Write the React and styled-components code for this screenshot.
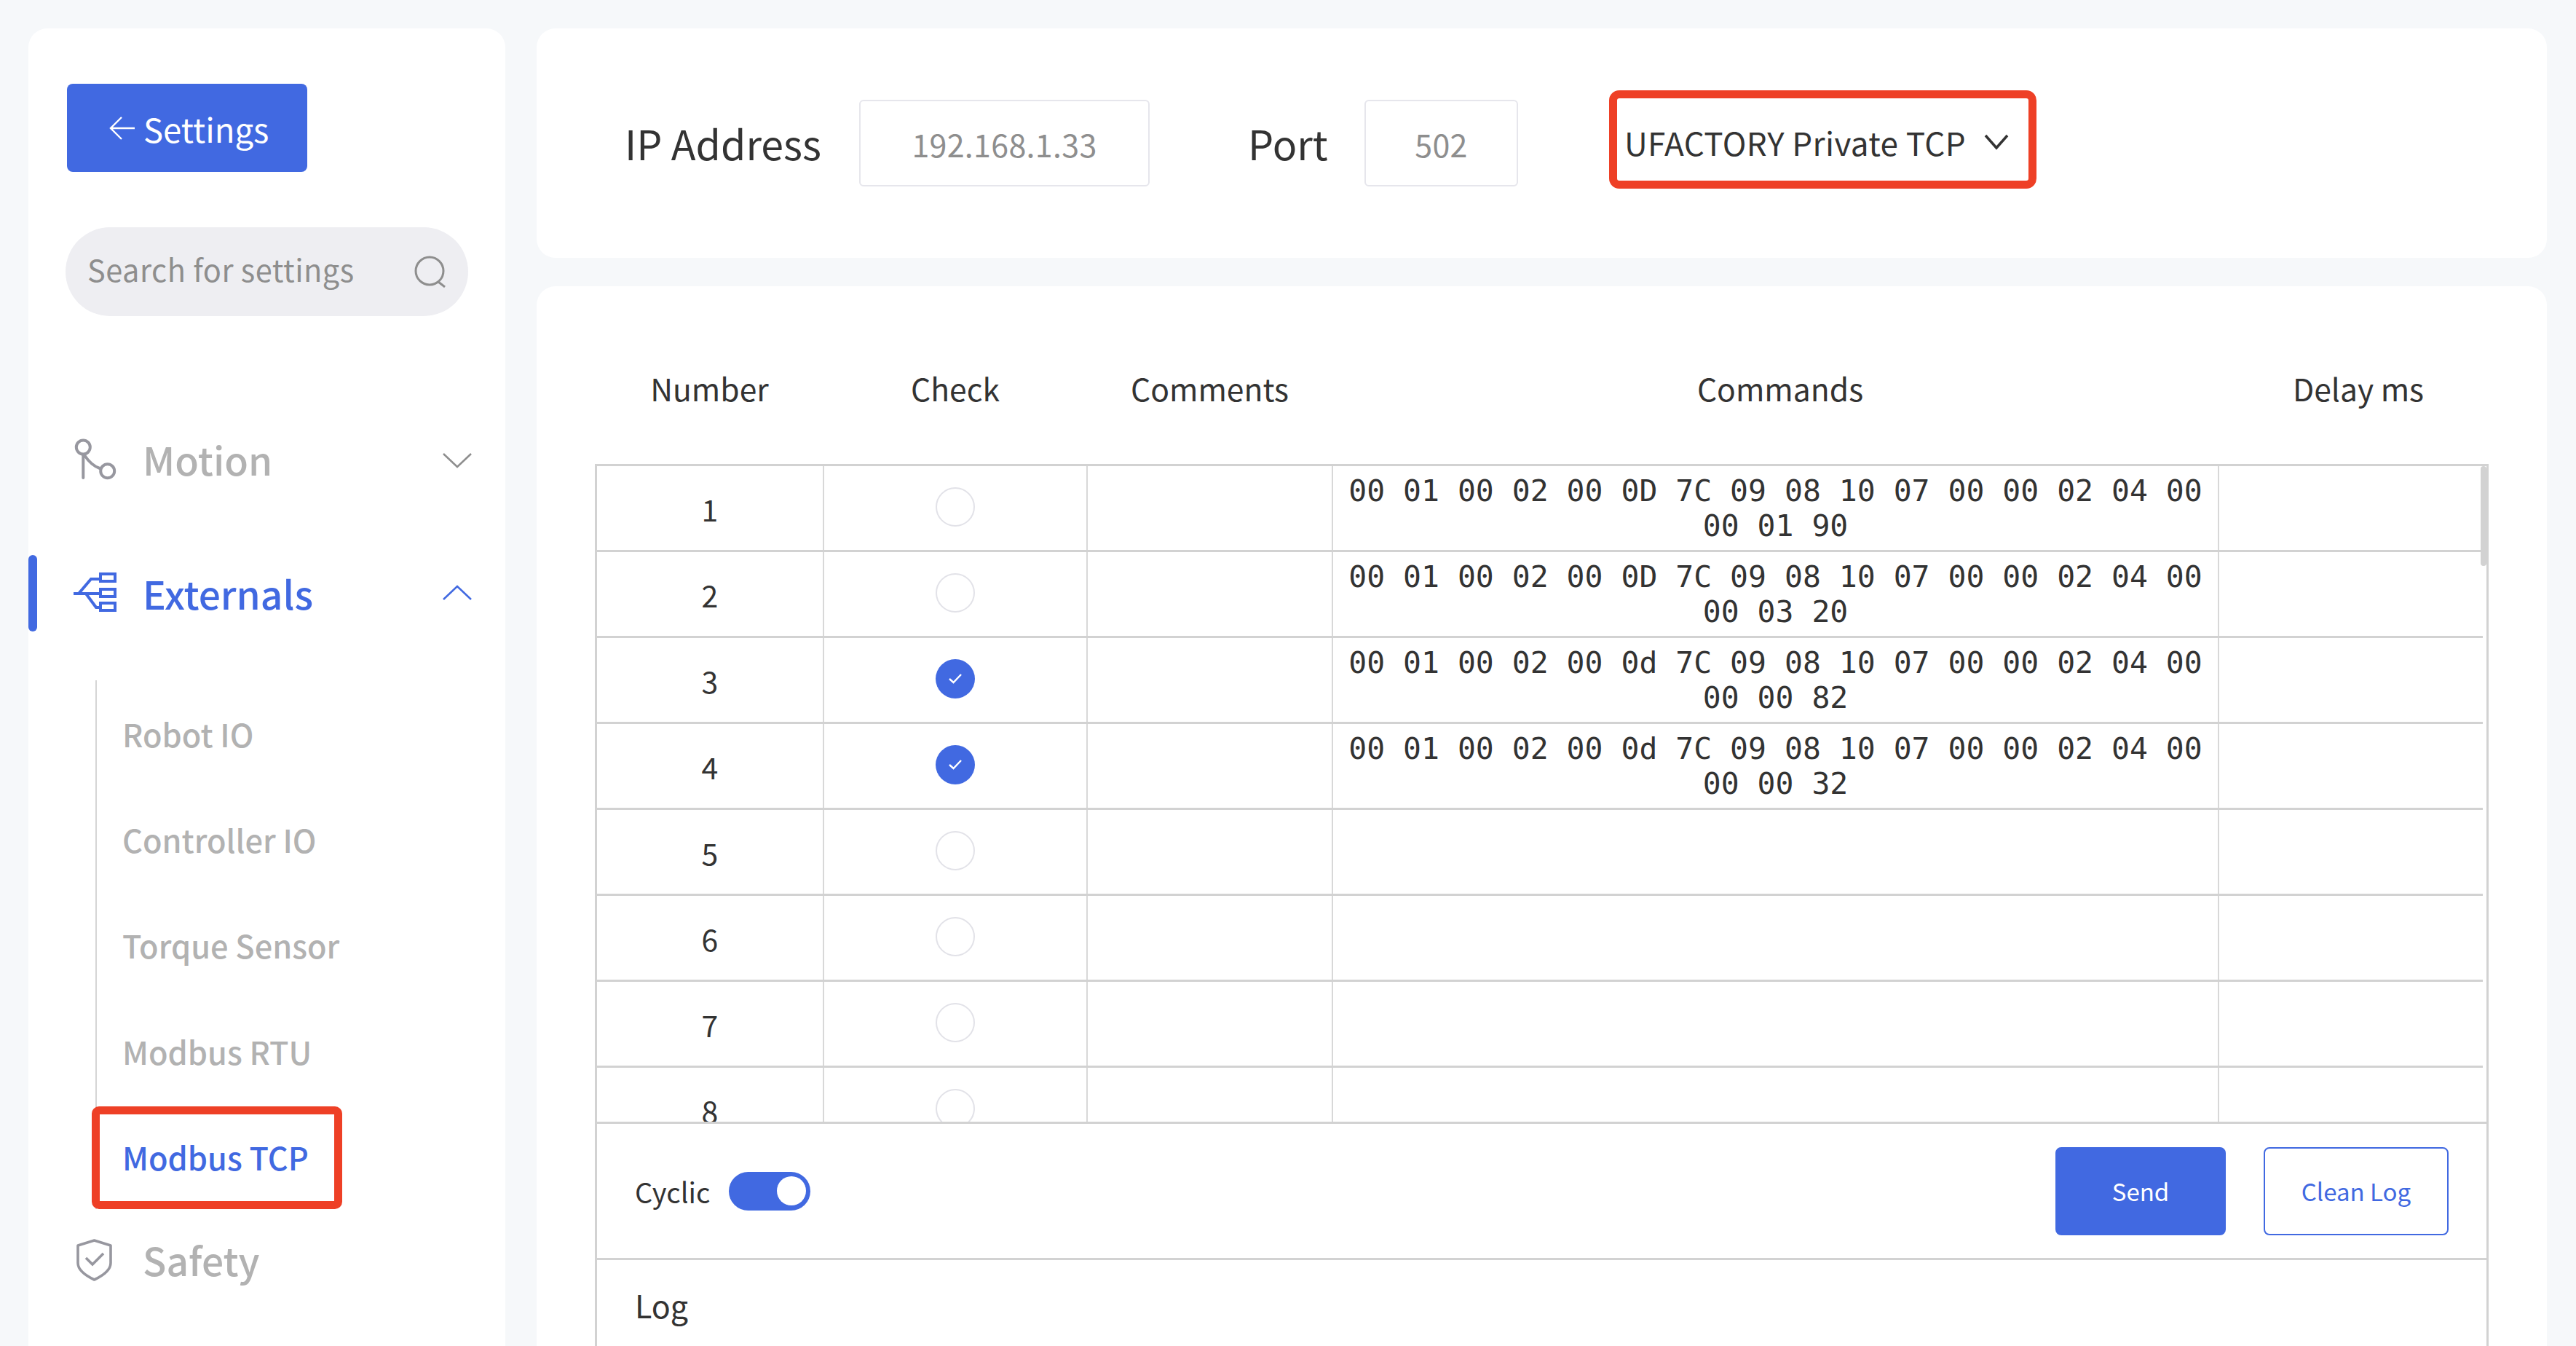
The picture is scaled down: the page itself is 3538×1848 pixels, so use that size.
import React from 'react'
import styled, { createGlobalStyle } from 'styled-components'

const BLUE = '#4169e1'
const RED = '#ee4026'
const LINE = '#d2d2d2'
const SANS = '"Noto Sans CJK SC", "Noto Sans", sans-serif'

const GlobalStyle = createGlobalStyle`
  html, body {
    margin: 0;
    padding: 0;
    background: #f6f8fa;
    font-family: ${SANS};
    color: #333;
  }
  *, *::before, *::after {
    box-sizing: border-box;
  }
`

const Page = styled.div`
  display: flex;
  gap: 43px;
  width: 3538px;
  height: 1848px;
  padding: 39px 40px 0 39px;
  overflow: hidden;
`

/* SIDEBAR */
const Sidebar = styled.aside`
  position: relative;
  flex: 0 0 655px;
  height: 1900px;
  padding-top: 76px;
  background: #fff;
  border-radius: 26px;
`

const BackButton = styled.button`
  display: flex;
  align-items: center;
  gap: 11px;
  width: 330px;
  height: 121px;
  margin-left: 53px;
  padding: 0 0 0 58px;
  font-family: inherit;
  font-size: 45.5px;
  color: #fff;
  background: ${BLUE};
  border: 0;
  border-radius: 8px;
`

const Search = styled.div`
  display: flex;
  align-items: center;
  justify-content: space-between;
  width: 553px;
  height: 122px;
  margin: 76px 0 146px 51px;
  padding: 0 30px 0 30px;
  font-size: 41.5px;
  letter-spacing: 0.5px;
  color: #8e8e8e;
  background: #eeeef2;
  border-radius: 61px;
  span {
    margin-bottom: 8px;
  }
`

const NavRow = styled.div`
  position: relative;
  display: flex;
  align-items: center;
  height: 105px;
  margin-bottom: ${(p) => p.$after || 0}px;
  padding-left: 51px;
  font-size: 53.3px;
  font-weight: 500;
  color: ${(p) => (p.$active ? BLUE : '#b2b2b2')};
  &::before {
    content: '';
    display: ${(p) => (p.$active ? 'block' : 'none')};
    position: absolute;
    left: 0;
    top: 0;
    bottom: 0;
    width: 12px;
    background: ${BLUE};
    border-radius: 6px;
  }
`

const NavLabel = styled.span`
  margin-bottom: ${(p) => (p.$active ? 2 : 6)}px;
`

const NavIcon = styled.svg`
  flex: none;
  margin-right: ${(p) => p.$gap}px;
  fill: none;
  stroke: ${(p) => (p.$active ? BLUE : '#97979f')};
`

const NavChevron = styled.svg`
  position: absolute;
  right: 46px;
  top: 50%;
  margin-top: -13px;
  fill: none;
  stroke: ${(p) => (p.$active ? BLUE : '#8e8e8e')};
  stroke-width: 2.5;
`

const SubList = styled.div`
  width: 563px;
  margin: 0 0 19px 92px;
  border-left: 2px solid #d5d5d5;
`

const SubItem = styled.div`
  position: relative;
  display: flex;
  align-items: center;
  height: 145.3px;
  padding-left: 35px;
  font-size: 43.3px;
  font-weight: 500;
  color: ${(p) => (p.$active ? BLUE : '#b2b2b2')};
  &::after {
    content: '';
    display: ${(p) => (p.$active ? 'block' : 'none')};
    position: absolute;
    left: -7px;
    top: 4px;
    width: 344px;
    height: 141px;
    border: 11px solid ${RED};
    border-radius: 10px;
  }
`

/* MAIN COLUMN */
const Main = styled.main`
  flex: 1;
  display: flex;
  flex-direction: column;
  gap: 39px;
  min-width: 0;
`

const ConnectionCard = styled.section`
  display: flex;
  align-items: center;
  flex: none;
  height: 315px;
  padding-left: 121px;
  background: #fff;
  border-radius: 26px;
`

const FieldLabel = styled.span`
  margin-bottom: 2px;
  margin-left: ${(p) => p.$left || 0}px;
  width: ${(p) => p.$width}px;
  font-size: 55.5px;
  white-space: nowrap;
`

const Field = styled.div`
  display: flex;
  align-items: center;
  justify-content: center;
  width: ${(p) => p.$width}px;
  height: 119px;
  font-size: 43px;
  letter-spacing: 0.3px;
  color: #8e8e8e;
  border: 2px solid #e6e6ec;
  border-radius: 6px;
`

const ProtocolSelect = styled.div`
  display: flex;
  align-items: center;
  width: 587px;
  height: 135px;
  margin: 0 0 10px 125px;
  padding: 7px 0 0 10px;
  font-size: 44px;
  letter-spacing: 0.4px;
  white-space: nowrap;
  border: 11px solid ${RED};
  border-radius: 14px;
  svg {
    flex: none;
    margin-left: 25px;
    fill: none;
    stroke: #333;
    stroke-width: 3.5;
  }
`

const TableCard = styled.section`
  flex: none;
  height: 1500px;
  padding: 39px 80px 0 81px;
  background: #fff;
  border-radius: 26px;
`

const HeaderRow = styled.div`
  display: grid;
  grid-template-columns: 313px 362px 337px 1230px 358px;
  align-items: center;
  height: 206px;
  padding-bottom: 6px;
  font-size: 42.6px;
  text-align: center;
`

const TableFrame = styled.div`
  border: solid ${LINE};
  border-width: 3px 3px 0 3px;
  margin: -1px 0 0 -1px;
`

const TableBody = styled.div`
  position: relative;
  height: 900px;
  overflow: hidden;
`

const ScrollThumb = styled.div`
  position: absolute;
  top: 0;
  right: 0;
  width: 8px;
  height: 137px;
  background: ${LINE};
  border-radius: 4px;
`

const Row = styled.div`
  display: grid;
  grid-template-columns: 312px 362px 337px 1217px 362px;
  width: 2590px;
  height: 118px;
  border-bottom: 3px solid ${LINE};
`

const Cell = styled.div`
  display: flex;
  align-items: center;
  justify-content: center;
  min-width: 0;
  font-size: 41px;
  border-right: ${(p) => (p.$last ? 0 : `2px solid #d8d8d8`)};
`

const CommandCell = styled.div`
  padding: 10px 20px 0;
  font-family: "DejaVu Sans Mono", monospace;
  font-size: 41.44px;
  line-height: 48px;
  text-align: center;
  border-right: 2px solid #d8d8d8;
`

const Radio = styled.div`
  display: flex;
  align-items: center;
  justify-content: center;
  width: 54px;
  height: 54px;
  margin-top: -4px;
  background: ${(p) => (p.$checked ? BLUE : '#fff')};
  border: ${(p) => (p.$checked ? 0 : '2px solid #e2e2e8')};
  border-radius: 50%;
  svg {
    fill: none;
    stroke: #fff;
    stroke-width: 2.4;
  }
`

const ActionBar = styled.div`
  display: flex;
  align-items: center;
  height: 187px;
  padding: 0 52px;
  border-top: 3px solid ${LINE};
`

const CyclicLabel = styled.span`
  font-size: 38px;
`

const Toggle = styled.div`
  display: flex;
  align-items: center;
  justify-content: flex-end;
  width: 112px;
  height: 53px;
  margin-left: 26px;
  padding-right: 6px;
  background: ${BLUE};
  border-radius: 27px;
  &::after {
    content: '';
    width: 40px;
    height: 40px;
    background: #fff;
    border-radius: 50%;
  }
`

const Actions = styled.div`
  display: flex;
  gap: 52px;
  margin-left: auto;
`

const ActionButton = styled.button`
  width: ${(p) => p.$width}px;
  height: 121px;
  font-family: inherit;
  font-size: 33px;
  color: ${(p) => (p.$outline ? BLUE : '#fff')};
  background: ${(p) => (p.$outline ? '#fff' : BLUE)};
  border: 2px solid ${BLUE};
  border-radius: 8px;
`

const LogSection = styled.div`
  height: 400px;
  padding: 30px 52px;
  font-size: 43px;
  border-top: 3px solid ${LINE};
`

const commands = {
  1: '00 01 00 02 00 0D 7C 09 08 10 07 00 00 02 04 00 00 01 90',
  2: '00 01 00 02 00 0D 7C 09 08 10 07 00 00 02 04 00 00 03 20',
  3: '00 01 00 02 00 0d 7C 09 08 10 07 00 00 02 04 00 00 00 82',
  4: '00 01 00 02 00 0d 7C 09 08 10 07 00 00 02 04 00 00 00 32',
}

const rows = [1, 2, 3, 4, 5, 6, 7, 8]
const subItems = ['Robot IO', 'Controller IO', 'Torque Sensor', 'Modbus RTU']

const Chevron = ({ up, active }) => (
  <NavChevron width="40" height="24" viewBox="0 0 40 24" $active={active}>
    <path d={up ? 'M1 21 L20 3 L39 21' : 'M1 3 L20 21 L39 3'} />
  </NavChevron>
)

export default function App() {
  return (
    <Page>
      <GlobalStyle />
      <Sidebar>
        <BackButton>
          <svg width="36" height="32" viewBox="0 0 36 32" fill="none" stroke="#fff" strokeWidth="2.4">
            <path d="M35 16 H2 M17 1 L2 16 L17 31" />
          </svg>
          Settings
        </BackButton>
        <Search>
          <span>Search for settings</span>
          <svg width="44" height="44" viewBox="0 0 44 44" fill="none" stroke="#8e8e8e" strokeWidth="3">
            <circle cx="21" cy="21" r="19" />
            <path d="M33 36 L42 43" />
          </svg>
        </Search>

        <NavRow $after={77}>
          <NavIcon width="100" height="100" viewBox="0 -7 100 100" strokeWidth="4" $gap={6}>
            <circle cx="24.3" cy="24" r="9.5" />
            <circle cx="57.7" cy="56.7" r="9.5" />
            <path d="M24.3 34 V66 M26 35 C32 44 38 50 47 53" strokeLinecap="round" />
          </NavIcon>
          <NavLabel>Motion</NavLabel>
          <Chevron />
        </NavRow>

        <NavRow $active $after={67}>
          <NavIcon width="90" height="90" viewBox="0 -3 90 90" strokeWidth="4" $gap={16} $active>
            <rect x="48" y="15" width="20" height="10" />
            <rect x="48" y="36" width="20" height="10" />
            <rect x="48" y="55" width="20" height="10" />
            <path d="M11 42 H48 M18 42 L35 22 H48 M28 42 L42 61 H48" />
          </NavIcon>
          <NavLabel $active>Externals</NavLabel>
          <Chevron up active />
        </NavRow>

        <SubList>
          {subItems.map((item) => (
            <SubItem key={item}>{item}</SubItem>
          ))}
          <SubItem $active>Modbus TCP</SubItem>
        </SubList>

        <NavRow>
          <NavIcon width="80" height="80" viewBox="0 0 80 80" strokeWidth="3.6" $gap={26}>
            <path d="M39.5 11 L62 18 V42 C62 53 50 60 39.5 65 C29 60 17 53 17 42 V18 Z" strokeLinejoin="round" />
            <path d="M28 35 L37 44 L52 29" />
          </NavIcon>
          <NavLabel>Safety</NavLabel>
        </NavRow>
      </Sidebar>

      <Main>
        <ConnectionCard>
          <FieldLabel $width={322}>IP Address</FieldLabel>
          <Field $width={399}>192.168.1.33</Field>
          <FieldLabel $left={135} $width={160}>Port</FieldLabel>
          <Field $width={211}>502</Field>
          <ProtocolSelect>
            UFACTORY Private TCP
            <svg width="34" height="22" viewBox="0 0 34 22">
              <path d="M2 2 L17 19 L32 2" />
            </svg>
          </ProtocolSelect>
        </ConnectionCard>

        <TableCard>
          <HeaderRow>
            <div>Number</div>
            <div>Check</div>
            <div>Comments</div>
            <div>Commands</div>
            <div>Delay ms</div>
          </HeaderRow>
          <TableFrame>
            <TableBody>
              {rows.map((n) => (
                <Row key={n}>
                  <Cell>{n}</Cell>
                  <Cell>
                    <Radio $checked={n === 3 || n === 4}>
                      {(n === 3 || n === 4) && (
                        <svg width="18" height="14" viewBox="0 0 18 14">
                          <path d="M1 7 L6.5 12 L17 1" />
                        </svg>
                      )}
                    </Radio>
                  </Cell>
                  <Cell />
                  <CommandCell>{commands[n]}</CommandCell>
                  <Cell $last />
                </Row>
              ))}
              <ScrollThumb />
            </TableBody>
            <ActionBar>
              <CyclicLabel>Cyclic</CyclicLabel>
              <Toggle />
              <Actions>
                <ActionButton $width={234}>Send</ActionButton>
                <ActionButton $width={254} $outline>Clean Log</ActionButton>
              </Actions>
            </ActionBar>
            <LogSection>Log</LogSection>
          </TableFrame>
        </TableCard>
      </Main>
    </Page>
  )
}
